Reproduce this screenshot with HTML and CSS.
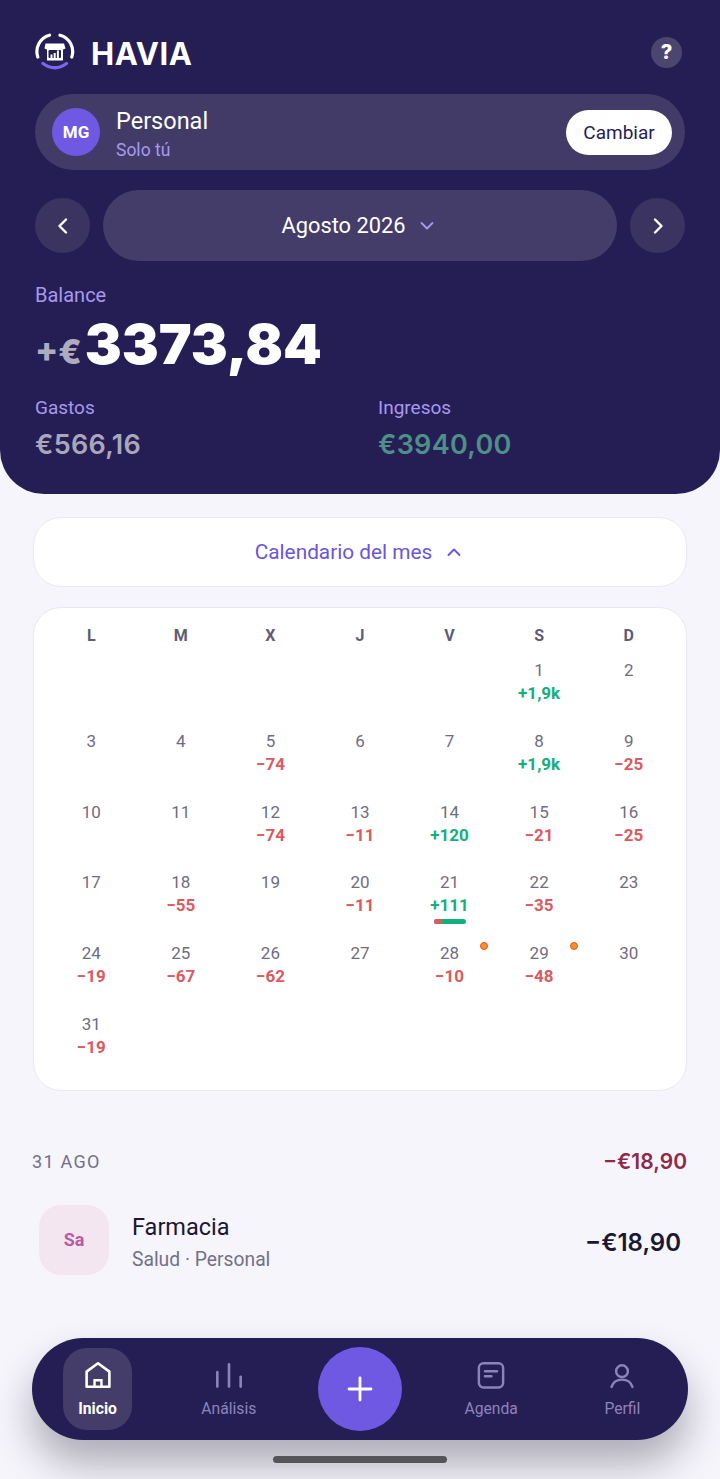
FILE: index.html
```html
<!DOCTYPE html>
<html lang="es">
<head>
<meta charset="utf-8">
<title>Havia</title>
<link rel="stylesheet" href="styles.css">
</head>
<body>
<div class="app">
  <header class="hero">
    <div class="brand-row">
      <div class="brand">
        <svg class="logo" viewBox="0 0 40 40" width="40" height="40" fill="none">
          <path d="M2.800 25A17 17 0 0 1 14.500 3.200" stroke="#fff" stroke-width="3.200" stroke-linecap="round"/>
          <path d="M25 3.200A17 17 0 0 1 36.800 25" stroke="#fff" stroke-width="3.200" stroke-linecap="round"/>
          <path d="M8 31.500Q19.800 40 31.500 31.500" stroke="#7c66ea" stroke-width="3.200" stroke-linecap="round"/>
          <path d="M10.500 11.500h18.500l1.500 5l-2.500 1V28.500h-16V17.500l-2.500-1z" fill="#fff"/>
          <rect x="13.500" y="18" width="12.500" height="8" rx="1" fill="#251e55"/>
          <path d="M15.500 22.500h2V26h-2zM18.700 21h2v5h-2zM21.900 18.500h2v7.500h-2z" fill="#fff"/>
        </svg>
        <span class="brand-name">HAVIA</span>
      </div>
      <div class="help">?</div>
    </div>

    <div class="account">
      <div class="avatar">MG</div>
      <div class="account-text">
        <div class="account-name">Personal</div>
        <div class="account-sub">Solo tú</div>
      </div>
      <div class="switch">Cambiar</div>
    </div>

    <div class="month-row">
      <div class="round-btn">
        <svg viewBox="0 0 24 24" width="24" height="24" fill="none"><path d="M15 5.500L8.500 12l6.500 6.500" stroke="#fff" stroke-width="2.400" stroke-linecap="round" stroke-linejoin="round"/></svg>
      </div>
      <div class="month-pill">
        <span>Agosto 2026</span>
        <svg viewBox="0 0 16 16" width="16" height="16" fill="none"><path d="M2.500 5l5.500 5.500L13.500 5" stroke="#a899ee" stroke-width="1.800" stroke-linecap="round" stroke-linejoin="round"/></svg>
      </div>
      <div class="round-btn">
        <svg viewBox="0 0 24 24" width="24" height="24" fill="none"><path d="M9 5.500l6.500 6.500L9 18.500" stroke="#fff" stroke-width="2.400" stroke-linecap="round" stroke-linejoin="round"/></svg>
      </div>
    </div>

    <div class="label balance-label">Balance</div>
    <div class="balance"><span class="balance-sign">+€</span><span class="balance-value">3373,84</span></div>

    <div class="totals">
      <div class="total">
        <div class="label">Gastos</div>
        <div class="total-value grey">€566,16</div>
      </div>
      <div class="total">
        <div class="label">Ingresos</div>
        <div class="total-value green">€3940,00</div>
      </div>
    </div>
  </header>

  <main class="content">
    <div class="toggle">
      <span>Calendario del mes</span>
      <svg viewBox="0 0 16 16" width="16" height="16" fill="none"><path d="M2.500 11L8 5.500L13.500 11" stroke="#6a55dc" stroke-width="1.900" stroke-linecap="round" stroke-linejoin="round"/></svg>
    </div>

    <section class="calendar">
      <div class="weekdays">
        <div>L</div><div>M</div><div>X</div><div>J</div><div>V</div><div>S</div><div>D</div>
      </div>
      <div class="days">
        <div class="day"></div><div class="day"></div><div class="day"></div><div class="day"></div><div class="day"></div>
        <div class="day"><span class="n">1</span><span class="v pos">+1,9k</span></div>
        <div class="day"><span class="n">2</span></div>

        <div class="day"><span class="n">3</span></div>
        <div class="day"><span class="n">4</span></div>
        <div class="day"><span class="n">5</span><span class="v neg">−74</span></div>
        <div class="day"><span class="n">6</span></div>
        <div class="day"><span class="n">7</span></div>
        <div class="day"><span class="n">8</span><span class="v pos">+1,9k</span></div>
        <div class="day"><span class="n">9</span><span class="v neg">−25</span></div>

        <div class="day"><span class="n">10</span></div>
        <div class="day"><span class="n">11</span></div>
        <div class="day"><span class="n">12</span><span class="v neg">−74</span></div>
        <div class="day"><span class="n">13</span><span class="v neg">−11</span></div>
        <div class="day"><span class="n">14</span><span class="v pos">+120</span></div>
        <div class="day"><span class="n">15</span><span class="v neg">−21</span></div>
        <div class="day"><span class="n">16</span><span class="v neg">−25</span></div>

        <div class="day"><span class="n">17</span></div>
        <div class="day"><span class="n">18</span><span class="v neg">−55</span></div>
        <div class="day"><span class="n">19</span></div>
        <div class="day"><span class="n">20</span><span class="v neg">−11</span></div>
        <div class="day"><span class="n">21</span><span class="v pos">+111</span><span class="bar"><i class="bar-neg"></i></span></div>
        <div class="day"><span class="n">22</span><span class="v neg">−35</span></div>
        <div class="day"><span class="n">23</span></div>

        <div class="day"><span class="n">24</span><span class="v neg">−19</span></div>
        <div class="day"><span class="n">25</span><span class="v neg">−67</span></div>
        <div class="day"><span class="n">26</span><span class="v neg">−62</span></div>
        <div class="day"><span class="n">27</span></div>
        <div class="day"><span class="dot"></span><span class="n">28</span><span class="v neg">−10</span></div>
        <div class="day"><span class="dot"></span><span class="n">29</span><span class="v neg">−48</span></div>
        <div class="day"><span class="n">30</span></div>

        <div class="day"><span class="n">31</span><span class="v neg">−19</span></div>
      </div>
    </section>

    <div class="group-head">
      <span class="group-date">31 AGO</span>
      <span class="group-total">−€18,90</span>
    </div>

    <div class="tx">
      <div class="tx-icon">Sa</div>
      <div class="tx-text">
        <div class="tx-name">Farmacia</div>
        <div class="tx-sub">Salud · Personal</div>
      </div>
      <div class="tx-amount">−€18,90</div>
    </div>
  </main>

  <nav class="nav">
    <div class="nav-item active">
      <svg viewBox="0 0 30 30" width="28" height="28" fill="none"><path d="M2.800 28.700V12.500L15 3.500l12.200 9v16.200z" stroke="#fff" stroke-width="2.800" stroke-linejoin="round"/><path d="M11.300 28.700v-7h7.400v7" stroke="#fff" stroke-width="2.600"/></svg>
      <span>Inicio</span>
    </div>
    <div class="nav-item">
      <svg viewBox="0 0 30 30" width="28" height="28" fill="none"><path d="M2.500 13v15.500M15 4.500v24M27.500 18v10.500" stroke="#8d83bb" stroke-width="2.800" stroke-linecap="round"/></svg>
      <span>Análisis</span>
    </div>
    <div class="fab">
      <svg viewBox="0 0 30 30" width="30" height="30" fill="none"><path d="M15 4v22M4 15h22" stroke="#fff" stroke-width="2.800" stroke-linecap="round"/></svg>
    </div>
    <div class="nav-item">
      <svg viewBox="0 0 30 30" width="28" height="28" fill="none"><rect x="2" y="3.500" width="26" height="26" rx="5" stroke="#8d83bb" stroke-width="2.600"/><path d="M8.500 12h13M8.500 17.500h7" stroke="#8d83bb" stroke-width="2.600" stroke-linecap="round"/></svg>
      <span>Agenda</span>
    </div>
    <div class="nav-item">
      <svg viewBox="0 0 30 30" width="28" height="28" fill="none"><circle cx="15" cy="12" r="6.300" stroke="#8d83bb" stroke-width="2.600"/><path d="M3.800 28.800C5.500 23.500 10 21 15 21s9.500 2.500 11.200 7.800" stroke="#8d83bb" stroke-width="2.600" stroke-linecap="round"/></svg>
      <span>Perfil</span>
    </div>
  </nav>
  <div class="home-bar"></div>
</div>
</body>
</html>
```

FILE: styles.css
```css
* { box-sizing: border-box; }
html, body { margin: 0; padding: 0; }
body { background: #f6f5fc; font-family: Roboto, "Liberation Sans", sans-serif; }
.app { position: relative; width: 720px; height: 1479px; overflow: hidden; background: #f6f5fc; }

.hero { height: 494px; padding: 32px 35px 0; background: #251e55; border-radius: 0 0 44px 44px; color: #fff; }
.brand-row { display: flex; align-items: center; justify-content: space-between; height: 40px; padding-right: 3px; }
.brand { display: flex; align-items: center; gap: 16px; }
.logo { display: block; }
.brand-name { font-family: Inter, sans-serif; font-weight: 700; font-size: 31px; letter-spacing: 0.5px; padding-top: 2px; }
.help { width: 31px; height: 31px; border-radius: 50%; background: #4b4570; display: flex; align-items: center; justify-content: center; font-family: Inter, sans-serif; font-weight: 800; font-size: 20px; }

.account { display: flex; align-items: center; height: 76px; margin-top: 22px; padding: 0 13px 0 17px; background: #423b68; border-radius: 38px; }
.avatar { width: 48px; height: 48px; border-radius: 50%; background: #6f59e3; display: flex; align-items: center; justify-content: center; font-weight: 700; font-size: 17px; }
.account-text { flex: 1; margin-left: 16px; padding-top: 4px; }
.account-name { font-size: 23.500px; line-height: 30px; }
.account-sub { font-size: 17.500px; line-height: 24px; margin-top: 2px; color: #a899ee; }
.switch { width: 106px; height: 45px; padding-top: 1px; border-radius: 23px; background: #fff; color: #251e55; display: flex; align-items: center; justify-content: center; font-size: 19px; }

.month-row { display: flex; align-items: center; justify-content: space-between; margin-top: 20px; }
.round-btn { width: 55px; height: 55px; border-radius: 50%; background: #3b3461; display: flex; align-items: center; justify-content: center; }
.month-pill { width: 514px; height: 71px; padding-right: 3px; border-radius: 36px; background: #443d69; display: flex; align-items: center; justify-content: center; gap: 14px; font-size: 21.800px; }

.label { font-size: 19px; line-height: 24px; color: #a899ee; }
.balance-label { margin-top: 22px; font-size: 20px; }
.balance { display: flex; align-items: baseline; margin-top: 7px; height: 60px; }
.balance-sign { font-family: Inter, sans-serif; font-weight: 800; font-size: 34px; color: #aeabbf; }
.balance-value { font-family: Inter, sans-serif; font-weight: 900; font-size: 55.300px; line-height: 60px; margin-left: 3px; color: #fff; }

.totals { display: flex; margin-top: 22px; }
.total { flex: none; width: 343px; }
.total-value { font-family: Inter, sans-serif; font-weight: 600; font-size: 27px; letter-spacing: 0.3px; line-height: 34px; margin-top: 8px; }
.grey { color: #aaa7bb; }
.green { color: #4f8f87; }

.content { padding: 23px 33px 0; }
.toggle { height: 70px; padding-right: 3px; border-radius: 28px; border: 1px solid #e9e8f1; background: #fff; display: flex; align-items: center; justify-content: center; gap: 14px; color: #6a55dc; font-size: 20.800px; }

.calendar { margin-top: 20px; height: 484px; padding: 16px 12.500px 0; border-radius: 28px; border: 1px solid #e9e8f1; background: #fff; }
.weekdays { display: grid; grid-template-columns: repeat(7, 1fr); height: 24px; line-height: 24px; text-align: center; font-weight: 700; font-size: 16px; color: #5f5c76; }
.days { display: grid; grid-template-columns: repeat(7, 1fr); grid-auto-rows: 70.800px; margin-top: 10px; }
.day { position: relative; display: flex; flex-direction: column; align-items: center; }
.n { font-size: 17px; line-height: 24px; color: #6f6c83; }
.v { font-weight: 700; font-size: 17px; line-height: 22px; }
.pos { color: #14b07c; }
.neg { color: #dc5a5f; }
.bar { width: 32px; height: 5px; margin-top: 3px; border-radius: 3px; background: #14b07c; overflow: hidden; }
.bar-neg { display: block; width: 8px; height: 5px; background: #dc5a5f; }
.dot { position: absolute; top: 1px; right: 6px; width: 8px; height: 8px; border-radius: 50%; background: #f7931e; border: 1px solid #e8502d; }

.group-head { display: flex; align-items: center; justify-content: space-between; margin-top: 58px; height: 24px; }
.group-date { font-size: 18px; letter-spacing: 1.300px; color: #73708a; margin-left: -1px; }
.group-total { font-family: Inter, sans-serif; font-weight: 600; font-size: 21px; color: #8e2a48; }

.tx { display: flex; align-items: center; margin-top: 32px; padding: 0 6px; }
.tx-icon { width: 70px; height: 70px; padding-bottom: 1px; border-radius: 22px; background: #f3e6f0; color: #b65d9f; display: flex; align-items: center; justify-content: center; font-weight: 700; font-size: 18px; }
.tx-text { flex: 1; margin-left: 23px; padding-top: 4px; }
.tx-name { font-size: 23.500px; line-height: 30px; color: #1a1733; }
.tx-sub { font-size: 19.300px; line-height: 26px; margin-top: 5px; color: #73708a; }
.tx-amount { font-family: Inter, sans-serif; font-weight: 600; font-size: 24px; color: #1a1733; margin-top: 4px; }

.nav { position: absolute; left: 32px; top: 1338px; width: 656px; height: 102px; border-radius: 51px; background: #251e55; box-shadow: 0 24px 40px rgba(20, 18, 40, 0.32); display: grid; grid-template-columns: repeat(5, 1fr); justify-items: center; align-items: center; }
.nav-item { width: 69px; height: 82px; display: flex; flex-direction: column; align-items: center; justify-content: center; gap: 11px; color: #8d83bb; font-size: 15.700px; line-height: 19px; border-radius: 24px; }
.nav-item svg { overflow: visible; flex: none; }
.nav-item.active { background: #443d69; color: #fff; font-weight: 700; }
.fab { width: 84px; height: 84px; border-radius: 50%; background: #6f59e3; display: flex; align-items: center; justify-content: center; }
.home-bar { position: absolute; left: 273px; top: 1456px; width: 174px; height: 7px; border-radius: 4px; background: #555558; }
```
